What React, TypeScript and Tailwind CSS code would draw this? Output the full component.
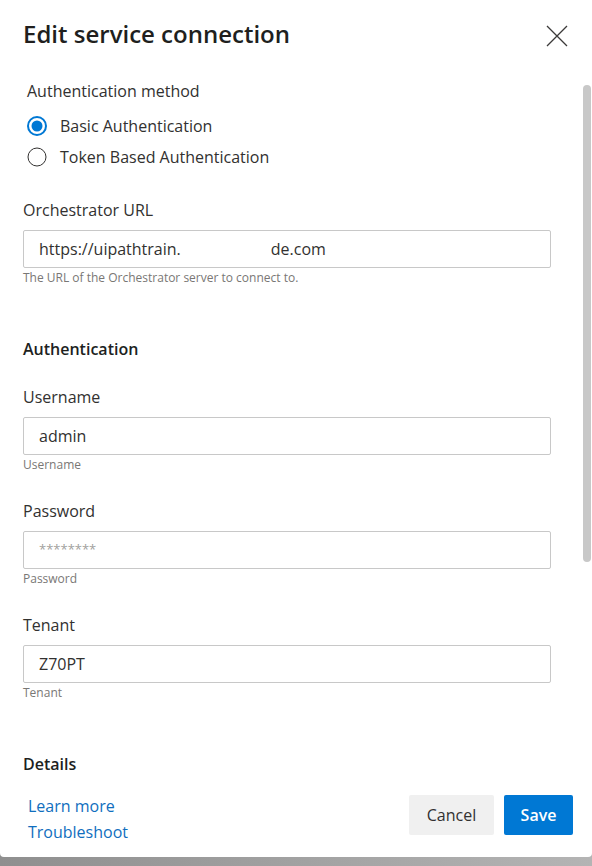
import React from 'react';

const font = "font-['Segoe_UI','Open_Sans',sans-serif]";

function Radio({ checked, label }: { checked: boolean; label: string }) {
  return (
    <div className="flex items-center h-[22px] pl-[27px]">
      <svg width="20" height="20" viewBox="0 0 20 20" className="shrink-0">
        {checked ? (
          <>
            <circle cx="10" cy="10" r="9" fill="none" stroke="#0078d4" strokeWidth="2" />
            <circle cx="10" cy="10" r="5.5" fill="#0078d4" />
          </>
        ) : (
          <circle cx="10" cy="10" r="9" fill="none" stroke="#323130" strokeWidth="1" />
        )}
      </svg>
      <span className="ml-[13px] text-[16px] leading-[22px] text-[#323130]">{label}</span>
    </div>
  );
}

function Field({
  label,
  helper,
  value,
  placeholder,
  className,
}: {
  label: string;
  helper: string;
  value?: React.ReactNode;
  placeholder?: string;
  className?: string;
}) {
  return (
    <div className={className}>
      <div className="text-[16px] leading-[22px] text-[#323130]">{label}</div>
      <div className="mt-[9px] h-[38px] w-[528px] border border-[#c8c8c8] rounded-[2px] flex items-center px-[15px]">
        {value ? (
          <span className="text-[16px] text-[#323130] whitespace-nowrap">{value}</span>
        ) : (
          <span className="text-[13px] text-[#a19f9d]">{placeholder}</span>
        )}
      </div>
      <div className="mt-[2px] text-[12px] leading-[16px] text-[#797775]">{helper}</div>
    </div>
  );
}

export default function App() {
  return (
    <div className={`${font} w-[592px] h-[866px] bg-gradient-to-r from-[#8f8f8f] to-[#b4b4b4] relative overflow-hidden`}>
      <div className="h-[857px] bg-white rounded-b-[4px] flex flex-col px-[23px]">
        {/* header */}
        <div className="pt-[18px] flex items-center justify-between">
          <h2 className="text-[24px] leading-[32px] font-semibold text-[#201f1e]">Edit service connection</h2>
          <svg width="22" height="22" viewBox="0 0 22 22" className="mr-[1px] mt-[4px]">
            <path d="M1 1 L21 21 M21 1 L1 21" stroke="#3b3a39" strokeWidth="1.3" />
          </svg>
        </div>

        <div className="mt-[30px] pl-[4px] text-[16px] leading-[22px] text-[#323130]">Authentication method</div>
        <div className="mt-[13px] -ml-[23px]">
          <Radio checked label="Basic Authentication" />
          <div className="mt-[9px]">
            <Radio checked={false} label="Token Based Authentication" />
          </div>
        </div>

        <Field
          className="mt-[31px]"
          label="Orchestrator URL"
          helper="The URL of the Orchestrator server to connect to."
          value={
            <>
              https://uipathtrain.<span className="inline-block w-[90px]" />de.com
            </>
          }
        />

        <div className="mt-[52px] text-[16px] leading-[22px] font-semibold text-[#201f1e]">Authentication</div>

        <Field className="mt-[26px]" label="Username" helper="Username" value="admin" />
        <Field className="mt-[27px]" label="Password" helper="Password" placeholder="********" />
        <Field className="mt-[27px]" label="Tenant" helper="Tenant" value="Z70PT" />

        <div className="mt-[52px] text-[16px] leading-[22px] font-semibold text-[#201f1e]">Details</div>

        {/* footer */}
        <div className="mt-[20px] flex justify-between -mr-[4px]">
          <div className="flex flex-col pl-[5px] gap-[4px]">
            <a className="text-[16px] leading-[22px] text-[#106ebe]">Learn more</a>
            <a className="text-[16px] leading-[22px] text-[#106ebe]">Troubleshoot</a>
          </div>
          <div className="flex gap-[10px]">
            <button className="h-[40px] w-[85px] rounded-[2px] bg-[#f0f0f0] text-[16px] text-[#323130]">Cancel</button>
            <button className="h-[40px] w-[69px] rounded-[2px] bg-[#0078d4] text-[16px] font-semibold text-white">Save</button>
          </div>
        </div>
      </div>

      {/* scrollbar */}
      <div className="absolute left-[583px] top-[85px] w-[8px] h-[477px] rounded-full bg-[#c8c8c8]" />
    </div>
  );
}
